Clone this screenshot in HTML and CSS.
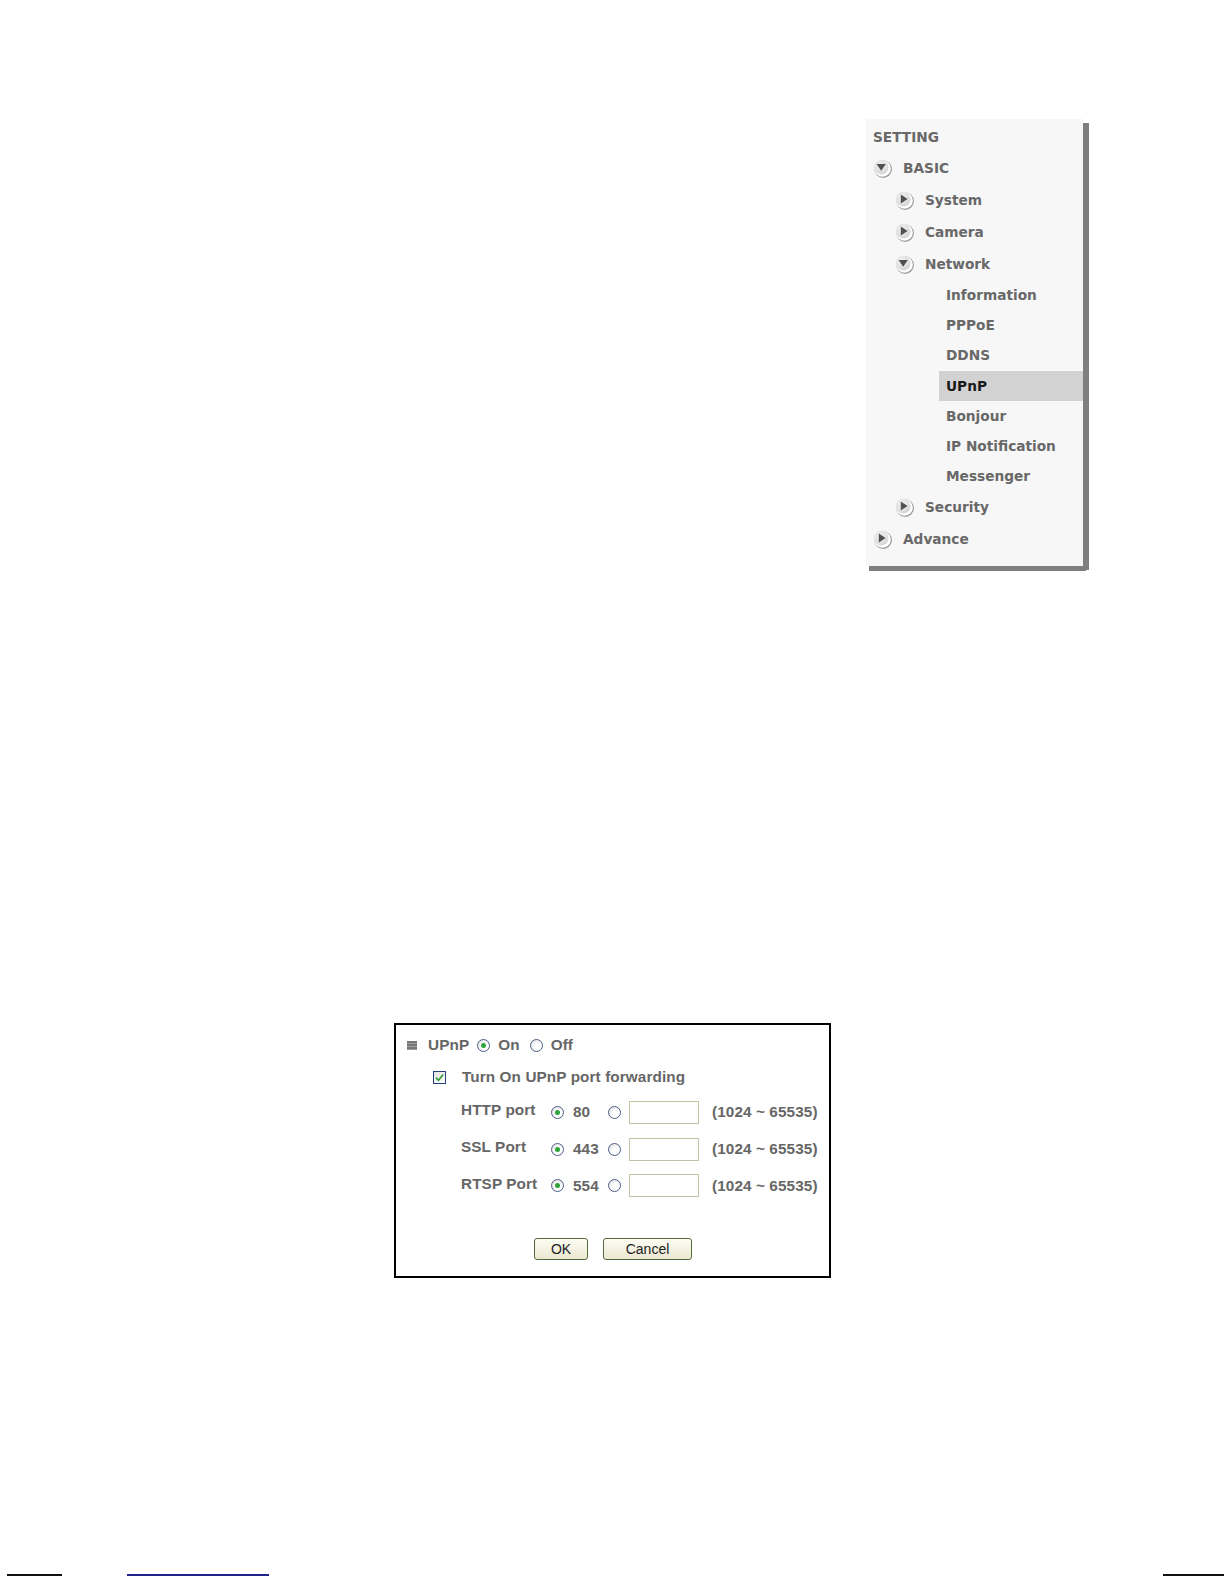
FILE: index.html
```html
<!DOCTYPE html>
<html>
<head>
<meta charset="utf-8">
<title>UPnP Setting</title>
<link rel="stylesheet" href="styles.css">
</head>
<body>
<svg class="defs" width="0" height="0" aria-hidden="true">
  <defs>
    <radialGradient id="face" cx="0.4" cy="0.35" r="0.75">
      <stop offset="0" stop-color="#f0f0f0"/>
      <stop offset="0.7" stop-color="#dedede"/>
      <stop offset="1" stop-color="#c6c6c6"/>
    </radialGradient>
    <linearGradient id="rim" x1="0" y1="0" x2="1" y2="1">
      <stop offset="0" stop-color="#d0d0d0"/>
      <stop offset="1" stop-color="#8f8f8f"/>
    </linearGradient>
    <g id="base">
      <circle cx="10" cy="10" r="9" fill="url(#rim)"/>
      <circle cx="9.5" cy="9.5" r="8.3" fill="#ffffff"/>
      <circle cx="8.2" cy="8.1" r="7.3" fill="url(#face)"/>
    </g>
    <g id="arrR"><use href="#base"/><polygon points="5.8,3.6 12.6,8 5.8,12.4" fill="#505050"/></g>
    <g id="arrD"><use href="#base"/><polygon points="3.6,5 12.8,5 8.2,11.8" fill="#505050"/></g>
  </defs>
</svg>
<div class="page">
  <nav class="menu">
    <div class="row title">SETTING</div>
    <div class="row lv1"><svg class="ico" viewBox="0 0 19 19"><use href="#arrD"/></svg><span>BASIC</span></div>
    <div class="row lv2"><svg class="ico" viewBox="0 0 19 19"><use href="#arrR"/></svg><span>System</span></div>
    <div class="row lv2"><svg class="ico" viewBox="0 0 19 19"><use href="#arrR"/></svg><span>Camera</span></div>
    <div class="row lv2"><svg class="ico" viewBox="0 0 19 19"><use href="#arrD"/></svg><span>Network</span></div>
    <div class="row lv3">Information</div>
    <div class="row lv3">PPPoE</div>
    <div class="row lv3">DDNS</div>
    <div class="row lv3 active">UPnP</div>
    <div class="row lv3">Bonjour</div>
    <div class="row lv3">IP Notification</div>
    <div class="row lv3">Messenger</div>
    <div class="row lv2"><svg class="ico" viewBox="0 0 19 19"><use href="#arrR"/></svg><span>Security</span></div>
    <div class="row lv1"><svg class="ico" viewBox="0 0 19 19"><use href="#arrR"/></svg><span>Advance</span></div>
  </nav>

  <form class="upnp">
    <div class="line first">
      <span class="sq"></span>
      <span class="lbl">UPnP</span>
      <span class="radio on"></span><span class="lbl opt">On</span>
      <span class="radio"></span><span class="lbl opt">Off</span>
    </div>
    <div class="line fwd">
      <span class="check"><svg viewBox="0 0 13 13" width="13" height="13"><path d="M3 6.6 L5.5 9.3 L10.2 3.6" fill="none" stroke="#2f9a2f" stroke-width="1.6"/></svg></span>
      <span class="lbl">Turn On UPnP port forwarding</span>
    </div>
    <div class="ports">
      <div class="port">
        <span class="plabel">HTTP port</span>
        <span class="radio on"></span><span class="pval">80</span>
        <span class="radio"></span><input class="box" type="text"><span class="range">(1024 ~ 65535)</span>
      </div>
      <div class="port">
        <span class="plabel">SSL Port</span>
        <span class="radio on"></span><span class="pval">443</span>
        <span class="radio"></span><input class="box" type="text"><span class="range">(1024 ~ 65535)</span>
      </div>
      <div class="port">
        <span class="plabel">RTSP Port</span>
        <span class="radio on"></span><span class="pval">554</span>
        <span class="radio"></span><input class="box" type="text"><span class="range">(1024 ~ 65535)</span>
      </div>
    </div>
    <div class="buttons">
      <button type="button" class="btn ok">OK</button>
      <button type="button" class="btn cancel">Cancel</button>
    </div>
  </form>

  <footer class="foot">
    <span class="rule black left"></span>
    <span class="rule blue"></span>
    <span class="rule black right"></span>
  </footer>
</div>
</body>
</html>
```
FILE: styles.css
```css
html, body {
  margin: 0;
  padding: 0;
  background: #ffffff;
}
.defs {
  position: absolute;
  width: 0;
  height: 0;
  overflow: hidden;
}
.page {
  width: 1224px;
  height: 1584px;
  display: flex;
  flex-direction: column;
  font-family: "Liberation Sans", Arial, sans-serif;
}

/* ---------- side menu ---------- */
.menu {
  margin: 119px 0 0 866px;
  width: 217px;
  height: 447px;
  box-sizing: border-box;
  padding-top: 3px;
  background: #f7f7f7;
  box-shadow: 6px 4px 0 #7f7f7f, 3px 5px 0 #7f7f7f;
  font-family: "DejaVu Sans", Verdana, sans-serif;
  font-size: 13.7px;
  font-weight: bold;
  color: #686868;
}
.row {
  display: flex;
  align-items: center;
  height: 32px;
  white-space: nowrap;
}
.row.title {
  height: 30px;
  padding-left: 7px;
}
.ico {
  width: 19px;
  height: 19px;
  flex: none;
  margin-right: 11px;
}
.lv1 { padding-left: 7px; }
.lv2 { padding-left: 29px; }
.lv3 {
  height: 30.2px;
  margin-left: 73px;
  padding-left: 7px;
}
.lv3.active {
  background: #d2d2d2;
  color: #1a1a1a;
}

/* ---------- UPnP form ---------- */
.upnp {
  margin: 457px 0 0 394px;
  width: 437px;
  height: 255px;
  box-sizing: border-box;
  border: 2px solid #000;
  font-size: 15.3px;
  font-weight: bold;
  color: #666;
  letter-spacing: 0.1px;
}
.line {
  display: flex;
  align-items: center;
  height: 24px;
}
.line.first {
  margin-top: 8px;
  padding-left: 11px;
}
.sq {
  width: 10px;
  height: 9px;
  background: repeating-linear-gradient(#777 0 2px, #9d9d9d 2px 3px);
  margin-right: 11px;
}
.first .lbl { margin-right: 8px; }
.first .opt { margin-left: 8px; margin-right: 10px; }
.line.fwd {
  margin-top: 8px;
  padding-left: 37px;
}
.check {
  width: 13px;
  height: 13px;
  box-sizing: border-box;
  border: 1px solid #243f7a;
  background: linear-gradient(135deg, #e3e3e3, #ffffff);
  margin-right: 16px;
  display: flex;
}
.check svg { margin: -1px; }
.radio {
  width: 13px;
  height: 13px;
  box-sizing: border-box;
  border: 1px solid #4c5f86;
  border-radius: 50%;
  background: radial-gradient(circle at 65% 65%, #ffffff 0 35%, #d8d8d8 100%);
  flex: none;
  position: relative;
}
.radio.on::after {
  content: "";
  position: absolute;
  left: 3px;
  top: 3px;
  width: 5px;
  height: 5px;
  border-radius: 50%;
  background: #2fa33a;
}
.ports {
  margin-top: 5px;
  padding-left: 65px;
}
.port {
  display: flex;
  align-items: center;
  height: 36.8px;
}
.plabel {
  width: 90px;
  padding-bottom: 4px;
}
.pval {
  width: 35px;
  margin-left: 9px;
}
.box {
  width: 70px;
  height: 23px;
  box-sizing: border-box;
  border: 1px solid #c2c4a6;
  background: #fff;
  margin: 0 13px 0 8px;
  padding: 0;
}
.buttons {
  display: flex;
  gap: 15px;
  margin-top: 34px;
  padding-left: 138px;
}
.btn {
  height: 22px;
  box-sizing: border-box;
  border: 1px solid #55693f;
  border-radius: 3px;
  background: linear-gradient(#fdfcf3, #ebe8d1);
  font-family: "Liberation Sans", Arial, sans-serif;
  font-size: 14px;
  font-weight: normal;
  color: #222;
  padding: 0;
  letter-spacing: 0;
}
.btn.ok { width: 54px; }
.btn.cancel { width: 89px; }

/* ---------- footer rules ---------- */
.foot {
  margin-top: auto;
  margin-bottom: 8px;
  display: flex;
  align-items: flex-end;
  height: 2px;
}
.rule { display: block; }
.rule.black {
  height: 2px;
  background: #111;
}
.rule.left {
  width: 55px;
  margin-left: 7px;
}
.rule.blue {
  width: 142px;
  height: 2px;
  margin-left: 65px;
  background: #22228f;
}
.rule.right {
  width: 61px;
  margin-left: auto;
}
```
